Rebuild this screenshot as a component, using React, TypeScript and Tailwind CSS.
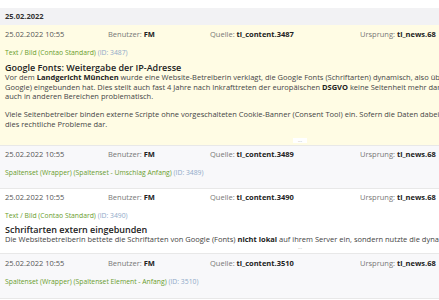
import React from "react";

const Header = ({ content }: { content: string }) => (
  <div className="flex h-[11px] items-center leading-[11px] text-[7.5px]">
    <div className="w-[103px] shrink-0 text-[#555]">25.02.2022 10:55</div>
    <div className="w-[102px] shrink-0 text-[#777]">
      Benutzer: <span className="font-bold text-[#222]">FM</span>
    </div>
    <div className="w-[150px] shrink-0 text-[#777]">
      Quelle: <span className="font-bold text-[#222]">{content}</span>
    </div>
    <div className="text-[#777]">
      Ursprung: <span className="font-bold text-[#222]">tl_news.68</span>
    </div>
  </div>
);

const Type = ({ label, id }: { label: string; id: string }) => (
  <div className="mt-[8px] h-[10px] leading-[10px] text-[6.8px] text-[#6a9d2e]">
    {label} <span className="text-[#8fa9c8]">(ID: {id})</span>
  </div>
);

const Toggler = () => (
  <div className="flex justify-center">
    <div className="flex h-[5px] w-[14px] items-center justify-center bg-white text-[5px] leading-[5px] text-[#999]">
      ...
    </div>
  </div>
);

export default function App() {
  return (
    <div
      className="h-[300px] w-[439px] overflow-hidden bg-white text-[#222]"
      style={{ fontFamily: '"Open Sans", "Noto Sans", sans-serif' }}
    >
      <div className="w-[600px] pt-[8px]">
        <div className="h-[17px] bg-[#f2f2f4] px-[5px] text-[7.5px] font-bold leading-[17px] text-[#333]">
          25.02.2022
        </div>

        {/* Row 1 */}
        <div className="border-b border-[#e8e8e8] bg-[#fffce4] px-[5px] pb-[2px] pt-[4px]">
          <Header content="tl_content.3487" />
          <Type label="Text / Bild (Contao Standard)" id="3487" />
          <div className="mt-[5px] h-[10px] text-[9px] font-semibold leading-[10px] text-[#222]">
            Google Fonts: Weitergabe der IP-Adresse
          </div>
          <div className="whitespace-nowrap text-[7.5px] leading-[9.7px] text-[#444]">
            <p>
              Vor dem <b className="text-[#222]">Landgericht München</b> wurde eine Website-Betreiberin verklagt, die Google Fonts (Schriftarten) dynamisch, also über einen externen Server (hier:
            </p>
            <p>
              Google) eingebunden hat. Dies stellt auch fast 4 Jahre nach Inkrafttreten der europäischen <b className="text-[#222]">DSGVO</b> keine Seltenheit mehr dar und ist
            </p>
            <p>auch in anderen Bereichen problematisch.</p>
            <p className="mt-[8px]">
              Viele Seitenbetreiber binden externe Scripte ohne vorgeschalteten Cookie-Banner (Consent Tool) ein. Sofern die Daten dabei ohne Einwilligung
            </p>
            <p>dies rechtliche Probleme dar.</p>
          </div>
          <div className="mt-[8px]">
            <Toggler />
          </div>
        </div>

        {/* Row 2 */}
        <div className="border-b border-[#e8e8e8] bg-[#f8f8fa] px-[5px] pb-[10px] pt-[3px]">
          <Header content="tl_content.3489" />
          <Type label="Spaltenset (Wrapper) (Spaltenset - Umschlag Anfang)" id="3489" />
        </div>

        {/* Row 3 */}
        <div className="border-b border-[#e8e8e8] bg-white px-[5px] pb-[3px] pt-[3px]">
          <Header content="tl_content.3490" />
          <Type label="Text / Bild (Contao Standard)" id="3490" />
          <div className="mt-[4px] h-[10px] text-[9px] font-semibold leading-[10px] text-[#222]">
            Schriftarten extern eingebunden
          </div>
          <div className="whitespace-nowrap text-[7.5px] leading-[9.7px] text-[#444]">
            Die Websitebetreiberin bettete die Schriftarten von Google (Fonts) <b className="text-[#222]">nicht lokal</b> auf ihrem Server ein, sondern nutzte die dynamische Einbindung
          </div>
          <div className="mt-[1px]">
            <Toggler />
          </div>
        </div>

        {/* Row 4 */}
        <div className="border-b border-[#e8e8e8] bg-[#f8f8fa] px-[5px] pb-[11px] pt-[4px]">
          <Header content="tl_content.3510" />
          <Type label="Spaltenset (Wrapper) (Spaltenset Element - Anfang)" id="3510" />
        </div>
      </div>
    </div>
  );
}
